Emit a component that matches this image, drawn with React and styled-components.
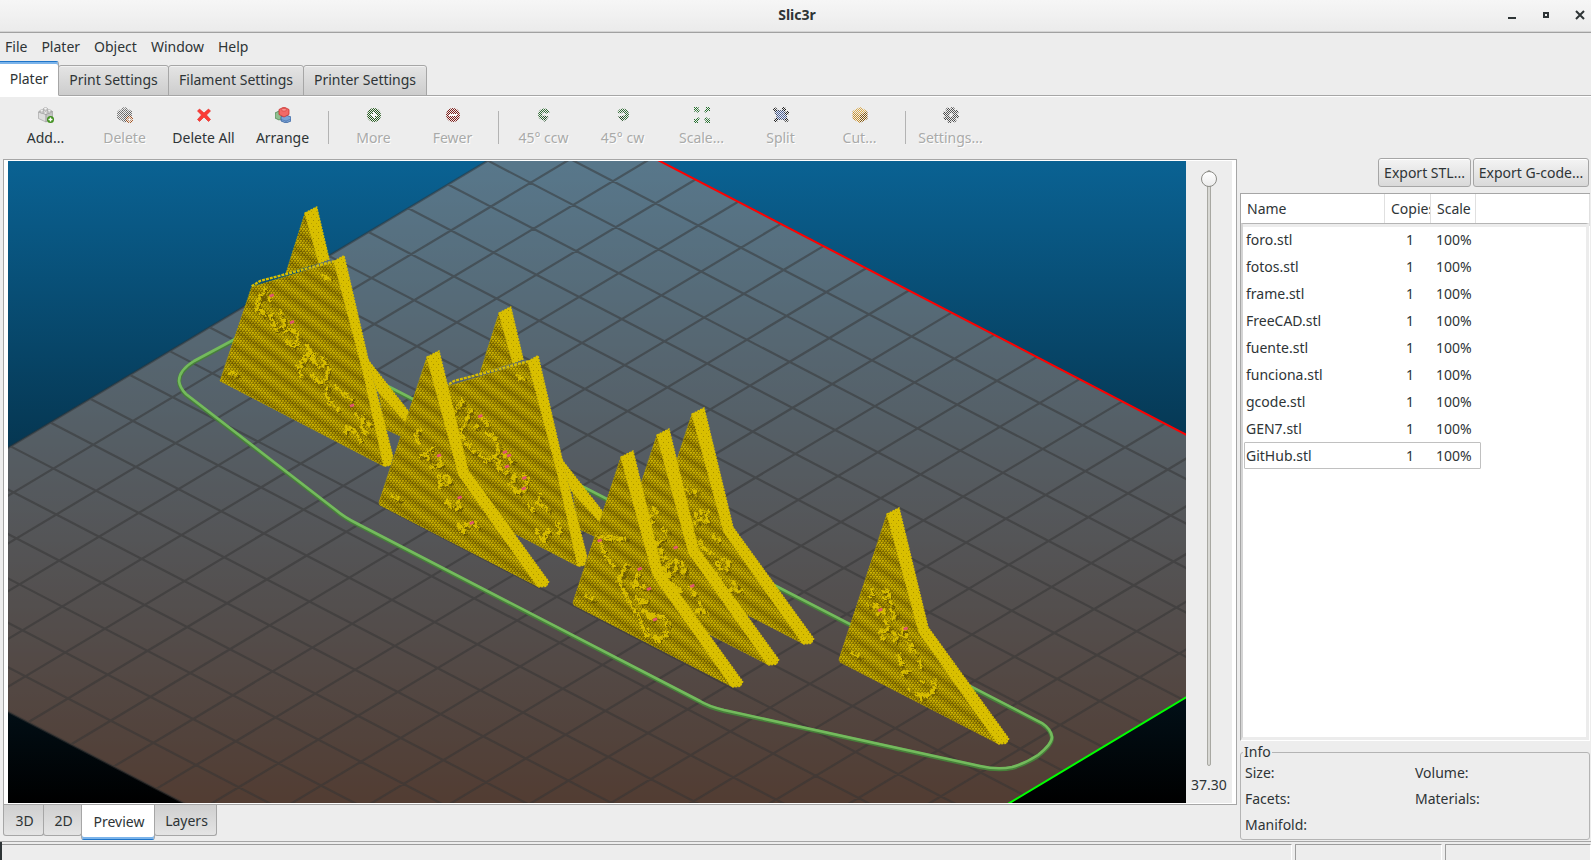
import React from "react";
import styled, { createGlobalStyle, css } from "styled-components";

const GlobalStyle = createGlobalStyle`
  * { box-sizing: border-box; }
  html, body { margin: 0; padding: 0; }
  body, button, input, table {
    font-family: "Noto Sans", "Open Sans", sans-serif;
    font-size: 14px;
    line-height: 20px;
    color: #2e3436;
  }
  body { background: #ededed; overflow: hidden; }
`;

const Window = styled.div`
  display: flex;
  flex-direction: column;
  height: 100vh;
  overflow: hidden;
`;

/* ---------- title bar and menu ---------- */

const TitleBar = styled.header`
  display: grid;
  grid-template-columns: 1fr auto 1fr;
  align-items: center;
  height: 33px;
  padding: 0 3px 3px 6px;
  background: linear-gradient(#f6f6f6, #ebebeb);
  border-bottom: 1px solid #a1a1a1;
  box-shadow: inset 0 -1px #d4d4d4;
`;

const Title = styled.h1`
  grid-column: 2;
  margin: 0;
  font-size: 14px;
  line-height: 20px;
  font-weight: 700;
`;

const WindowControls = styled.div`
  display: flex;
  justify-content: flex-end;
  gap: 18px;
`;

const ControlButton = styled.button`
  display: flex;
  width: 16px;
  height: 16px;
  padding: 0;
  border: 0;
  background: none;
`;

const MenuBar = styled.nav`
  display: flex;
  flex: none;
  height: 28px;
  gap: 14px;
  padding: 4px 5px;
`;

const MenuButton = styled.button`
  padding: 0;
  border: 0;
  background: none;
`;

/* ---------- tabs ---------- */

const TabStrip = styled.div`
  display: flex;
  flex: none;
  ${(p) =>
    p.$bottom
      ? css`
          align-items: flex-start;
          height: 36px;
          padding-left: 3px;
        `
      : css`
          align-items: flex-end;
          height: 35px;
          box-shadow: inset 0 -1px #a6a6a6;
        `}
`;

const Tab = styled.button`
  flex: none;
  width: ${(p) => p.$width}px;
  height: 31px;
  padding: 0;
  border: 1px solid #a6a6a6;
  ${(p) =>
    p.$bottom
      ? css`
          padding: 2px 0 0 2px;
          border-top: 0;
          border-radius: 0 0 3px 3px;
          margin-right: -1px;
          background: linear-gradient(#cfcfcf, #e4e4e4);
        `
      : css`
          padding-bottom: 1px;
          border-radius: 3px 3px 0 0;
          margin-right: -1px;
          background: linear-gradient(#e4e4e4, #cdcdcd);
          box-shadow: inset 0 1px #f2f2f2;
        `}
  ${(p) =>
    p.$active &&
    (p.$bottom
      ? css`
          height: 35px;
          padding-top: 0;
          background: #fff;
          border-bottom: 1px solid #1f75c9;
          box-shadow: inset 0 -2px #7cb4ea;
          z-index: 1;
        `
      : css`
          height: 35px;
          background: #fff;
          padding-bottom: 0;
          border-left: 0;
          border-bottom-color: #fff;
          border-top: 1px solid #1f75c9;
          box-shadow: inset 0 2px #7cb4ea;
          border-top-left-radius: 0;
          z-index: 1;
        `)}
`;

/* ---------- toolbar ---------- */

const ToolBar = styled.div`
  display: flex;
  flex: none;
  height: 63px;
  padding: 10px 6px 0;
  border-top: 1px solid #fff;
`;

const ToolButton = styled.button`
  display: flex;
  flex-direction: column;
  align-items: center;
  flex: none;
  width: 79px;
  height: 44px;
  gap: 5px;
  padding: 0;
  border: 0;
  background: none;
  white-space: nowrap;
  &:disabled {
    color: #a9aaa9;
    text-shadow: 1px 1px #fff;
  }
`;

const Separator = styled.div`
  flex: none;
  width: 1px;
  height: 33px;
  margin: 4px 5px 0 6px;
  background: #b3b3b3;
`;

/* ---------- main area ---------- */

const Main = styled.main`
  display: flex;
  flex: 1;
  min-height: 0;
`;

const PlaterColumn = styled.section`
  display: flex;
  flex-direction: column;
  flex: 1;
  min-width: 0;
`;

const PreviewFrame = styled.div`
  display: flex;
  flex: 1;
  min-height: 0;
  margin-left: 3px;
  padding: 1px 4px 1px 4px;
  background: #fff;
  border: 1px solid #a6a6a6;
`;

const Scene = styled.svg`
  display: block;
  flex: 1;
  min-width: 0;
  height: 100%;
`;

const LayerColumn = styled.div`
  display: flex;
  flex-direction: column;
  align-items: center;
  width: 46px;
  padding: 9px 0 8px;
  background: #ededed;
`;

const LayerSlider = styled.input`
  appearance: none;
  writing-mode: vertical-lr;
  direction: rtl;
  flex: 1;
  min-height: 0;
  width: 16px;
  margin: 0 0 9px;
  background: none;
  &::-webkit-slider-runnable-track {
    width: 4px;
    height: 100%;
    border: 1px solid #a8a8a2;
    border-radius: 2px;
    background: #d8d8d4;
  }
  &::-webkit-slider-thumb {
    appearance: none;
    width: 16px;
    height: 16px;
    margin-left: -7px;
    border: 1px solid #8b8b86;
    border-radius: 50%;
    background: linear-gradient(#fff, #ececec);
  }
`;

const Side = styled.aside`
  display: flex;
  flex-direction: column;
  flex: none;
  width: 354px;
  padding: 0 0 0 3px;
`;

const Actions = styled.div`
  display: flex;
  justify-content: flex-end;
  gap: 2px;
  margin: -1px 2px 6px 0;
`;

const ActionButton = styled.button`
  height: 29px;
  width: ${(p) => p.$width}px;
  padding: 0;
  white-space: nowrap;
  border: 1px solid #a6a6a6;
  border-radius: 3px;
  background: linear-gradient(#f4f4f4, #d9d9d9);
  box-shadow: inset 0 1px #fff;
`;

const ListFrame = styled.div`
  position: relative;
  flex: 1;
  min-height: 0;
  margin-right: 1px;
  background: #fff;
  border: 1px solid #a6a6a6;
  border-width: 1px 0 0 1px;
  border-bottom: 1px solid #fff;
  &::after {
    content: "";
    position: absolute;
    inset: 29px 1px 0 0;
    border: 3px solid #ececec;
    border-left: 2px solid #d4d4d4;
    border-top: 1px solid #b4b4b4;
    box-shadow: inset 0 3px #ececec;
    pointer-events: none;
  }
`;

const PartsTable = styled.table`
  width: 100%;
  table-layout: fixed;
  border-collapse: separate;
  border-spacing: 0;
`;

const Head = styled.th`
  height: 32px;
  padding: 5px 0 7px 6px;
  font-weight: 400;
  text-align: left;
  overflow: hidden;
  white-space: nowrap;
  border-right: 1px solid #e0e0e0;
`;

const Row = styled.tr`
  position: relative;
  ${(p) =>
    p.$focused &&
    css`
      &::after {
        content: "";
        position: absolute;
        inset: 0 auto 0 3px;
        width: 235px;
        border: 1px solid #c0c0c0;
        border-radius: 1px;
        pointer-events: none;
      }
    `}
`;

const Cell = styled.td`
  height: 27px;
  padding: 0 0 0 ${(p) => p.$indent || 5}px;
`;

const Info = styled.fieldset`
  display: grid;
  grid-template-columns: 170px 1fr;
  grid-auto-rows: 20px;
  row-gap: 6px;
  height: 98px;
  margin: 1px 1px 1px 0;
  padding: 1px 4px 3px;
  border: 1px solid #b4b4b4;
  border-radius: 3px;
  legend {
    height: 20px;
    margin-left: -2px;
    padding: 0 1px;
  }
`;

const StatusBar = styled.footer`
  display: flex;
  flex: none;
  gap: 3px;
  height: 19px;
  padding-top: 2px;
  border-top: 1px solid #a6a6a6;
  box-shadow: inset 2px 0 #2e3436;
`;

const StatusPane = styled.div`
  flex: ${(p) => (p.$width ? "none" : 1)};
  width: ${(p) => (p.$width ? p.$width + "px" : "auto")};
  margin-left: ${(p) => (p.$first ? 2 : 0)}px;
  border: 1px solid #9c9c9c;
  border-right-color: #fff;
  border-bottom: 0;
  border-left-width: ${(p) => (p.$first ? 0 : 1)}px;
`;

/* ---------- toolbar icons ---------- */

const Brick = ({ top, left, right, line }) => (
  <g stroke={line} strokeWidth=".5" strokeLinejoin="round">
    <path d="M.5 5 7 2 14.500 4.500 8 7.500Z" fill={top} />
    <path d="M.5 5v6.500l7.500 3.500V7.500Z" fill={left} />
    <path d="M8 7.500V15l6.500-3.500v-7Z" fill={right} />
    <path d="M5.500 1.500v2q2 1.500 4 0v-2Z" fill={left} />
    <ellipse cx="7.500" cy="1.800" rx="2" ry="1.200" fill={top} />
    <path d="M2 3.500v2q2 1.500 3.500 0v-2Z" fill={left} />
    <ellipse cx="3.800" cy="3.800" rx="1.800" ry="1.100" fill={top} />
    <path d="M9.500 3.500v2q2 1.500 3.500 0v-2Z" fill={left} />
    <ellipse cx="11.300" cy="3.800" rx="1.800" ry="1.100" fill={top} />
    <ellipse cx="7.600" cy="6" rx="1.800" ry="1.100" fill={top} />
  </g>
);

const Badge = ({ color }) => (
  <g>
    <circle cx="12.500" cy="12.500" r="3.500" fill={color} />
    <path d="M10.500 12.500h4M12.500 10.500v4" stroke="#fff" strokeWidth="1.400" />
  </g>
);

const Turn = () => (
  <>
    <circle
      cx="8"
      cy="7.500"
      r="4"
      fill="none"
      stroke="#2f6a33"
      strokeWidth="4"
      strokeDasharray="17 9"
      transform="rotate(90 8 7.500)"
    />
    <path d="M7 8.500 13 9.500 8.500 15Z" fill="#1f4a22" />
  </>
);

const icons = {
  add: (
    <>
      <Brick top="#fafafa" left="#dedede" right="#c4c4c4" line="#8f8f8f" />
      <Badge color="#3f8f1d" />
    </>
  ),
  remove: (
    <>
      <Brick top="#a2a2a2" left="#7e7e7e" right="#666" line="#444" />
      <Badge color="#a14a12" />
    </>
  ),
  clear: <path d="M3.500 2 8 6l4.500-4L14.500 4 10.500 8l4 4.500-2 2L8 10l-4.500 4.500-2-2L5.500 8l-4-4Z" fill="#fb3b36" stroke="#e2211c" strokeWidth=".6" />,
  arrange: (
    <>
      <path d="M0 6 4 4l4 2v5l-4 2-4-2Z" fill="#8fbf90" stroke="#4c8450" strokeWidth=".8" />
      <path d="M6 9.500 11 8l5 2v4l-5 2-5-2Z" fill="#7ba3d6" stroke="#38639f" strokeWidth=".8" />
      <path d="M4 2.500 9 0l5 2.500v5L9 10 4 7.500Z" fill="#f26a67" stroke="#c93331" strokeWidth=".8" />
      <ellipse cx="9" cy="2.800" rx="2.600" ry="1.400" fill="#f9918e" stroke="#d33f3c" strokeWidth=".6" />
      <path d="M6 12.500 11 14l5-2M11 14v2" fill="none" stroke="#38639f" strokeWidth=".5" />
    </>
  ),
  more: (
    <>
      <circle cx="8" cy="8" r="7" fill="#24591c" />
      <path d="M5 8h6M8 5v6" stroke="#fff" strokeWidth="2" />
    </>
  ),
  fewer: (
    <>
      <circle cx="8" cy="8" r="7" fill="#7d1a16" />
      <path d="M4 8h8" stroke="#fff" strokeWidth="2" />
    </>
  ),
  ccw: <Turn />,
  cw: <g transform="translate(16 0) scale(-1 1)"><Turn /></g>,
  scale: (
    <path
      d="M0 0h5L3.800 1.500 6 4 4 6 1.500 3.800 0 5ZM16 0v5l-1.500-1.200L12 6l-2-2 2.200-2.500L11 0ZM0 16v-5l1.500 1.200L4 10l2 2-2.200 2.500L5 16ZM16 16h-5l1.200-1.500L10 12l2-2 2.500 2.200L16 11Z"
      fill="#25702d"
    />
  ),
  split: (
    <>
      <path d="m3 3 4 1 5-2-.5 5L14 9l-1 4-5-1-5 1 1-4-2-4Z" fill="#4a629c" stroke="#29375c" />
      {[[2, 2.5], [11, 2], [14, 6], [3, 13], [13.5, 13]].map(([x, y]) => (
        <circle key={x} cx={x} cy={y} r="1.600" fill="#333" stroke="#000" strokeWidth=".8" />
      ))}
    </>
  ),
  cut: (
    <>
      <path d="M8 0 15.500 4 8 8 .5 4Z" fill="#d9a848" />
      <path d="M.5 4 8 8v8L.5 12Z" fill="#c98f28" />
      <path d="M15.500 4 8 8v8l7.500-4Z" fill="#855608" />
    </>
  ),
  settings: (
    <>
      <circle cx="8" cy="8" r="4.200" fill="none" stroke="#555" strokeWidth="4.600" />
      <circle cx="8" cy="8" r="7" fill="none" stroke="#444" strokeWidth="2" strokeDasharray="3.200 2.300" />
    </>
  ),
};

const ToolIcon = ({ name, dim }) => (
  <svg width="16" height="16" viewBox="0 0 16 16" aria-hidden="true">
    {dim && (
      <defs>
        <pattern id={`checker-${name}`} width="2" height="2" patternUnits="userSpaceOnUse">
          <path d="M0 0h1v1H0ZM1 1h1v1H1Z" fill="#fff" shapeRendering="crispEdges" />
        </pattern>
        <mask id={`dim-${name}`} maskUnits="userSpaceOnUse" x="0" y="0" width="16" height="16">
          <rect width="16" height="16" fill={`url(#checker-${name})`} />
        </mask>
      </defs>
    )}
    <g mask={dim ? `url(#dim-${name})` : undefined}>{icons[name]}</g>
  </svg>
);

const tools = [
  ["add", "Add...", false],
  ["remove", "Delete", true],
  ["clear", "Delete All", false],
  ["arrange", "Arrange", false],
  null,
  ["more", "More", true],
  ["fewer", "Fewer", true],
  null,
  ["ccw", "45° ccw", true],
  ["cw", "45° cw", true],
  ["scale", "Scale...", true],
  ["split", "Split", true],
  ["cut", "Cut...", true],
  null,
  ["settings", "Settings...", true],
];

/* ---------- 3D scene ---------- */

/* Print bed: orthographic projection of a 20 x 20 cell grid. */
const bedPoint = (i, j) =>
  `${(110.67 + 42.68 * i + 39.76 * j).toFixed(2)} ${(720.67 + 22.18 * i - 23.81 * j).toFixed(2)}`;
const bedLine = (i1, j1, i2, j2) => `M${bedPoint(i1, j1)}L${bedPoint(i2, j2)}`;
const gridPath = Array.from({ length: 20 }, (_, k) =>
  bedLine(k - 7, -1, k - 7, 19) + bedLine(-7, k - 1, 13, k - 1)
).join("");

/* Part outlines are in thirds of a scene unit. */
const at = (x, y, points) =>
  points.map(([px, py]) => `${(x + px / 3).toFixed(1)},${(y + py / 3).toFixed(1)}`).join(" ");

const Solid = ({ x, y, face, strip }) => (
  <>
    <polygon points={at(x, y, face)} fill="url(#mesh)" />
    <polygon points={at(x, y, face)} fill="url(#bands)" stroke="#b39d00" strokeWidth=".8" strokeDasharray="2 1" />
    <polygon points={at(x, y, strip)} fill="url(#rim)" stroke="#d9bf00" strokeWidth="1.400" strokeDasharray="2 1" />
  </>
);

const Relief = ({ x, y, d, sparks = [] }) => (
  <g transform={`translate(${x} ${y}) scale(.33333)`} fill="none" strokeLinejoin="bevel">
    <g filter="url(#rough)">
      <path d={d} stroke="#6e5c00" strokeWidth="9" strokeDasharray="14 5 23 7 9 4" transform="translate(6 6)" />
      <path d={d} stroke="#d6bc00" strokeWidth="11" strokeDasharray="17 2 26 4 11 2" />
    </g>
    {sparks.map(([sx, sy]) => (
      <path key={`${sx}-${sy}`} d={`M${sx} ${sy}l12-5`} stroke="#e0566e" strokeWidth="8" />
    ))}
  </g>
);

const finFace = [[0, 0], [-144, 436], [-142, 444], [335, 690], [96, 352]];
const finStrip = [[0, 0], [36, -18], [123, 340], [365, 674], [358, 688], [333, 690], [96, 355]];

const Fin = ({ x, y, d, sparks }) => (
  <>
    <Solid x={x} y={y} face={finFace} strip={finStrip} />
    <Relief x={x} y={y} d={"M-112 415l12 8l10 2l6 10" + d} sparks={sparks} />
  </>
);

const Block = ({ x, y, d, sparks }) => (
  <>
    <Solid
      x={x}
      y={y}
      face={[[0, 0], [-57, 180], [42, 150]]}
      strip={[[0, 0], [35, -18], [72, 138], [42, 150]]}
    />
    <Solid
      x={x}
      y={y}
      face={[[220, 530], [307, 632], [287, 670], [240, 648]]}
      strip={[[188, 440], [310, 595], [305, 630], [215, 530]]}
    />
    <Solid
      x={x}
      y={y}
      face={[[-255, 504], [-160, 222], [87, 147], [177, 480], [237, 760]]}
      strip={[[87, 145], [117, 128], [190, 442], [263, 730], [256, 757], [237, 760], [175, 478]]}
    />
    <polyline
      points={at(x, y, [[-160, 220], [-135, 204], [87, 145]])}
      fill="none"
      stroke="#d9bf00"
      strokeWidth="2.400"
      strokeDasharray="3 1"
    />
    <Relief x={x} y={y} d={"M55 188l8 4l14 8M-228 482l10-4l14 8" + d} sparks={sparks} />
  </>
);

const Parts = () => (
  <g>
    <Block
      x={305}
      y={213}
      d="M-115 224l-14 20l-16 30l2 16l24 14M-110 250l12 18M-105 300l6 24l14 26l24-14l-4-26l-14-18M-62 380l12 12l22 4l10-20l-16-22l-14-8l-18 10M6 395l10 20l-22 34l-20 18M30 420l-8 20l22 24l18-10l-10-24M68 464l-4 34l-20 14l-24-28M-20 478l14 16M70 520l-10 20l20 36l22 18M92 518l22 26l30 20M120 660l14-16l22 18l14 26M152 602l24 16l-6 28l18 20M130 640l-12 14M186 628l12 10"
      sparks={[[-106, 250], [-45, 330], [135, 580]]}
    />
    <Block
      x={499}
      y={313}
      d="M-118 256l16 6l-24 24l-18 24M-84 288l-32 74l12 20l30 38M-56 310l22 26M-75 345l12-10M-40 360l28 14l12 26l-4 30l-34 12l-24-24M-6 440l10 30l26 12M12 420l28 28M72 482l14 20l-10 30l-26 6l-14-28l12-26M84 570l20 30M122 546l-6 22l34 26M110 652l32 40M134 676l18-26M170 630l14 14l-4 20"
      sparks={[[-62, 312], [24, 430], [18, 463], [70, 497], [68, 529], [12, 420]]}
    />
    <Fin
      x={427}
      y={357}
      d="M-24 218l-10 24l12 20M-24 296l22-6l10 24M38 300l4 22l-34 10M20 270l-20 14M34 350l6 40l28-12l4-10l-20-12M58 428l18 24M92 424l8 26l-18 8M92 500l22 30M110 510l20-14l28 20"
      sparks={[[30, 298], [92, 424], [128, 500]]}
    />
    <Fin
      x={692}
      y={414}
      d="M4 226l10 20M-20 220l12 22M22 290l22 6l4 26l-30-6l-8-20M16 334l-10-16M60 366l24 14M20 380l18 26l30 18M30 420l-8 16M90 430l22 14l-6 24l-26-8l-8-20M66 480l18 24M120 500l18 18M110 530l14-4l28 8"
    />
    <Fin
      x={657}
      y={435}
      d="M-14 214l16 20M-22 260l18 4M-24 240l10 10M16 280l18 14M10 340l6 28l26 16M-4 330l24-20M60 372l-4 32l-24 22l-10-24l20-16M70 380l14 20l-8 26M40 440l36 36M98 450l16 30M126 500l14 30l16 10M130 520l-14 16"
      sparks={[[50, 340], [100, 455]]}
    />
    <Fin
      x={621}
      y={457}
      d="M-72 240l90 6M-66 248l20 50l28 34M18 320l-24 50l20 40l64 120l40 24M40 370l20 20l26 6M44 420l18 18l18-14M66 460l32 20l24-6l16 26l-4 34l-22 14l-24-10M90 490l-14-24M50 390l-20-12M56 350l-14 10"
      sparks={[[50, 338], [78, 398], [96, 490], [-70, 253]]}
    />
    <Fin
      x={887}
      y={514}
      d="M-46 226l-2 26M-18 234l20-6l6 16l-16 12M-56 270l-4 6M-40 272l30 22l-24 8M8 262l8 12M8 284l20 22l-20 12M-8 320l12 24l-20 14M-20 350l10 28M16 352l14 18l-10 16M52 342l-10 20l22 12l14 24M36 420l8 34M64 400l24 20M42 484l24-16M98 440l6 24M62 520l12 16M100 496l8 16M138 500l4 22l-18 22l-24 6l-18-14"
      sparks={[[-26, 290], [50, 346]]}
    />
  </g>
);

const skirtPath =
  "M250 332 194 362Q179 371 179 382Q180 389 186 395L336 511Q344 518 358 525L700 702Q708 707 724 711L980 767Q998 771 1012 768Q1026 764 1038 756Q1052 745 1052 738Q1051 730 1042 724L380 383";

const PreviewScene = () => (
  <Scene viewBox="8 161 1178 642" preserveAspectRatio="xMidYMid slice" role="img" aria-label="Toolpath preview">
    <defs>
      <linearGradient id="sky" x1="0" y1="0" x2="0" y2="1">
        <stop offset="0" stopColor="#0a6293" />
        <stop offset="1" stopColor="#000" />
      </linearGradient>
      <pattern id="mesh" width="3" height="4" patternUnits="userSpaceOnUse">
        <g shapeRendering="crispEdges">
          <rect width="3" height="4" fill="#756300" />
          <rect width="2" height="1" fill="#ceb400" />
          <rect y="1" width="2" height="1" fill="#a89100" />
          <rect x="2" y="2" width="1" height="1" fill="#ceb400" />
          <rect y="2" width="1" height="1" fill="#b39b00" />
          <rect x="2" y="3" width="1" height="1" fill="#a89100" />
        </g>
      </pattern>
      <pattern id="rim" width="5" height="6" patternUnits="userSpaceOnUse">
        <g shapeRendering="crispEdges">
          <rect width="5" height="6" fill="#d9bf00" />
          <rect x="1" y="1" width="1" height="1" fill="#b8a000" />
          <rect x="3" y="4" width="1" height="1" fill="#a38d00" />
        </g>
      </pattern>
      <linearGradient id="bands" gradientUnits="userSpaceOnUse" x1="0" y1="0" x2="-8" y2="12" spreadMethod="repeat">
        <stop offset="0" stopColor="#5a4700" stopOpacity=".34" />
        <stop offset=".5" stopColor="#d9bf00" stopOpacity=".26" />
        <stop offset="1" stopColor="#5a4700" stopOpacity=".34" />
      </linearGradient>
      <filter id="rough" x="-20%" y="-20%" width="140%" height="140%">
        <feTurbulence type="fractalNoise" baseFrequency=".09" numOctaves="2" seed="4" />
        <feDisplacementMap in="SourceGraphic" scale="26" xChannelSelector="R" yChannelSelector="G" />
      </filter>
    </defs>
    <rect x="8" y="161" width="1178" height="642" fill="url(#sky)" />
    <path
      d={`M${bedPoint(-7, -1)}L${bedPoint(-7, 19)}L${bedPoint(13, 19)}L${bedPoint(13, -1)}Z`}
      fill="rgb(204,153,128)"
      fillOpacity=".4"
    />
    <path d={gridPath} stroke="#333" strokeOpacity=".5" strokeWidth="2.200" />
    <path d={bedLine(-7, 19, 13, 19)} stroke="#f00" strokeWidth="2" />
    <path d={bedLine(13, 19, 13, -1)} stroke="#0f0" strokeWidth="2" />
    <path d={skirtPath} fill="none" stroke="#47803a" strokeWidth="4" />
    <path d={skirtPath} fill="none" stroke="#74ba5d" strokeWidth="2.600" transform="translate(0 -1)" />
    <Parts />
  </Scene>
);

/* ---------- data ---------- */

const files = ["foro.stl", "fotos.stl", "frame.stl", "FreeCAD.stl", "fuente.stl", "funciona.stl", "gcode.stl", "GEN7.stl", "GitHub.stl"];
const focusedFile = "GitHub.stl";

const pages = [["Plater", 59], ["Print Settings", 111], ["Filament Settings", 136], ["Printer Settings", 124]];
const views = [["3D", 41], ["2D", 39], ["Preview", 74], ["Layers", 63]];

export default function App() {
  return (
    <Window>
      <GlobalStyle />
      <TitleBar>
        <Title>Slic3r</Title>
        <WindowControls>
          <ControlButton aria-label="Minimize">
            <svg width="16" height="16"><path d="M4 11h8" stroke="#2e3436" strokeWidth="2" /></svg>
          </ControlButton>
          <ControlButton aria-label="Maximize">
            <svg width="16" height="16"><rect x="6" y="6" width="4" height="4" fill="none" stroke="#2e3436" strokeWidth="2" /></svg>
          </ControlButton>
          <ControlButton aria-label="Close">
            <svg width="16" height="16"><path d="m4 4 8 8m0-8-8 8" stroke="#2e3436" strokeWidth="2" /></svg>
          </ControlButton>
        </WindowControls>
      </TitleBar>

      <MenuBar>
        {["File", "Plater", "Object", "Window", "Help"].map((m) => (
          <MenuButton key={m}>{m}</MenuButton>
        ))}
      </MenuBar>

      <TabStrip role="tablist">
        {pages.map(([label, width], i) => (
          <Tab key={label} role="tab" aria-selected={i === 0} $active={i === 0} $width={width}>{label}</Tab>
        ))}
      </TabStrip>

      <ToolBar role="toolbar">
        {tools.map((tool, i) =>
          tool ? (
            <ToolButton key={tool[0]} disabled={tool[2]}>
              <ToolIcon name={tool[0]} dim={tool[2]} />
              {tool[1]}
            </ToolButton>
          ) : (
            <Separator key={i} />
          )
        )}
      </ToolBar>

      <Main>
        <PlaterColumn>
          <PreviewFrame>
            <PreviewScene />
            <LayerColumn>
              <LayerSlider id="layer" type="range" aria-label="Layer height" min="0" max="37.3" step="0.1" defaultValue="37.3" />
              <output htmlFor="layer">37.30</output>
            </LayerColumn>
          </PreviewFrame>
          <TabStrip role="tablist" $bottom>
            {views.map(([label, width], i) => (
              <Tab key={label} role="tab" aria-selected={i === 2} $bottom $active={i === 2} $width={width}>{label}</Tab>
            ))}
          </TabStrip>
        </PlaterColumn>

        <Side>
          <Actions>
            <ActionButton $width={93}>Export STL...</ActionButton>
            <ActionButton $width={116}>Export G-code...</ActionButton>
          </Actions>
          <ListFrame>
            <PartsTable>
              <colgroup>
                <col style={{ width: 144 }} />
                <col style={{ width: 46 }} />
                <col style={{ width: 45 }} />
                <col />
              </colgroup>
              <thead>
                <tr>
                  <Head scope="col">Name</Head>
                  <Head scope="col">Copies</Head>
                  <Head scope="col">Scale</Head>
                  <Head as="td" />
                </tr>
              </thead>
              <tbody>
                {files.map((file) => (
                  <Row key={file} $focused={file === focusedFile}>
                    <Cell>{file}</Cell>
                    <Cell $indent={21}>1</Cell>
                    <Cell>100%</Cell>
                  </Row>
                ))}
              </tbody>
            </PartsTable>
          </ListFrame>
          <Info>
            <legend>Info</legend>
            <span>Size:</span>
            <span>Volume:</span>
            <span>Facets:</span>
            <span>Materials:</span>
            <span>Manifold:</span>
          </Info>
        </Side>
      </Main>

      <StatusBar>
        <StatusPane $first />
        <StatusPane $width={147} />
        <StatusPane $width={146} />
      </StatusBar>
    </Window>
  );
}
